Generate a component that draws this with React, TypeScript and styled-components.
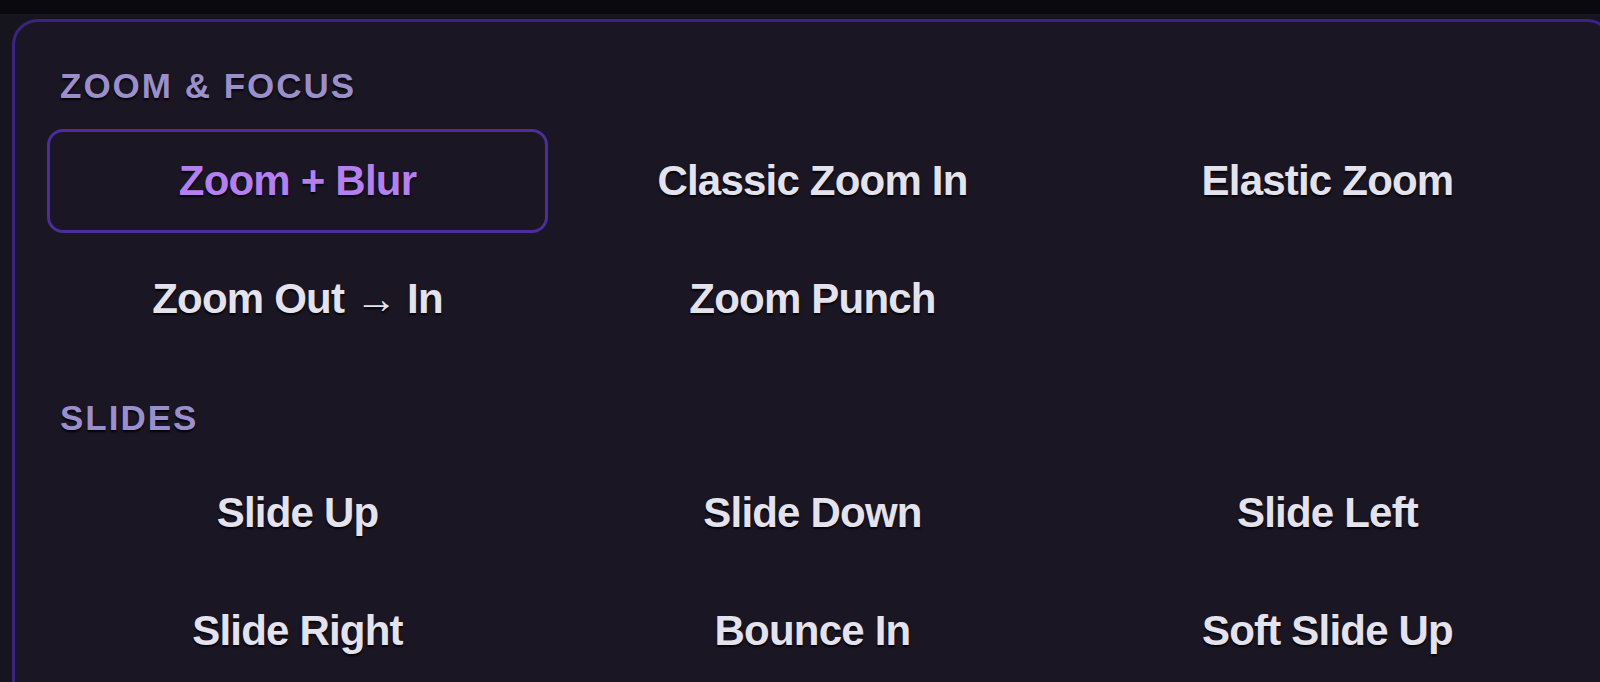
import React from 'react';
import styled, { createGlobalStyle } from 'styled-components';

const GlobalStyle = createGlobalStyle`
  html, body {
    margin: 0;
    padding: 0;
    background: #16141c;
    overflow: hidden;
  }
  body {
    font-family: "Liberation Sans", Arial, sans-serif;
  }
`;

const TopStrip = styled.div`
  height: 14px;
  background: #0a090d;
`;

const Panel = styled.div`
  box-sizing: border-box;
  width: 1601px;
  margin: 5px 0 0 12px;
  padding: 44px 32px 40px;
  background: #1a1624;
  border: 3px solid #3b2380;
  border-radius: 26px;
`;

const Section = styled.section`
  & + & {
    margin-top: 47px;
  }
`;

const Heading = styled.h3`
  margin: 0;
  padding-left: 13px;
  font-size: 35px;
  line-height: 40px;
  font-weight: 700;
  letter-spacing: 2px;
  text-transform: uppercase;
  color: #9b8fcb;
  text-shadow: 0 2px 2px rgba(0, 0, 0, 0.85);
`;

const Grid = styled.div`
  display: grid;
  grid-template-columns: repeat(3, 1fr);
  gap: 14px;
  margin-top: 23px;
`;

const Item = styled.button<{ $active?: boolean }>`
  box-sizing: border-box;
  height: 104px;
  display: flex;
  align-items: center;
  justify-content: center;
  background: transparent;
  border: 3px solid ${(p) => (p.$active ? '#4e2c9e' : 'transparent')};
  border-radius: 16px;
  font-family: "Liberation Sans", Arial, sans-serif;
  font-size: 42px;
  font-weight: 700;
  letter-spacing: -0.8px;
  color: ${(p) => (p.$active ? '#b67ff0' : '#e4e2ec')};
  text-shadow: 0 2px 2px rgba(0, 0, 0, 0.85);
  cursor: pointer;
  padding: 0;
`;

const groups = [
  {
    title: 'Zoom & Focus',
    items: ['Zoom + Blur', 'Classic Zoom In', 'Elastic Zoom', 'Zoom Out → In', 'Zoom Punch'],
  },
  {
    title: 'Slides',
    items: ['Slide Up', 'Slide Down', 'Slide Left', 'Slide Right', 'Bounce In', 'Soft Slide Up'],
  },
];

export default function App() {
  const selected = 'Zoom + Blur';
  return (
    <>
      <GlobalStyle />
      <TopStrip />
      <Panel>
        {groups.map((g) => (
          <Section key={g.title}>
            <Heading>{g.title}</Heading>
            <Grid>
              {g.items.map((name) => (
                <Item key={name} $active={name === selected}>
                  {name}
                </Item>
              ))}
            </Grid>
          </Section>
        ))}
      </Panel>
    </>
  );
}
